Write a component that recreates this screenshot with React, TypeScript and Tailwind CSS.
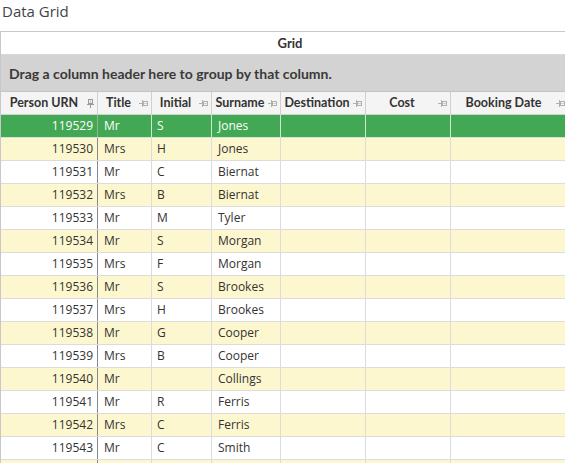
import React from 'react';

type Person = { urn: number; title: string; initial: string; surname: string };

const people: Person[] = [
  { urn: 119529, title: 'Mr', initial: 'S', surname: 'Jones' },
  { urn: 119530, title: 'Mrs', initial: 'H', surname: 'Jones' },
  { urn: 119531, title: 'Mr', initial: 'C', surname: 'Biernat' },
  { urn: 119532, title: 'Mrs', initial: 'B', surname: 'Biernat' },
  { urn: 119533, title: 'Mr', initial: 'M', surname: 'Tyler' },
  { urn: 119534, title: 'Mr', initial: 'S', surname: 'Morgan' },
  { urn: 119535, title: 'Mrs', initial: 'F', surname: 'Morgan' },
  { urn: 119536, title: 'Mr', initial: 'S', surname: 'Brookes' },
  { urn: 119537, title: 'Mrs', initial: 'H', surname: 'Brookes' },
  { urn: 119538, title: 'Mr', initial: 'G', surname: 'Cooper' },
  { urn: 119539, title: 'Mrs', initial: 'B', surname: 'Cooper' },
  { urn: 119540, title: 'Mr', initial: '', surname: 'Collings' },
  { urn: 119541, title: 'Mr', initial: 'R', surname: 'Ferris' },
  { urn: 119542, title: 'Mrs', initial: 'C', surname: 'Ferris' },
  { urn: 119543, title: 'Mr', initial: 'C', surname: 'Smith' },
];

// widths include the 1px right border of each cell
const W = {
  urn: 'w-[97px]',
  title: 'w-[54px]',
  initial: 'w-[60px]',
  surname: 'w-[69px]',
  destination: 'w-[85px]',
  cost: 'w-[85px]',
  booking: 'w-[118px]',
};

const boldFont = { fontFamily: 'Lato, "Open Sans", sans-serif' };

function Pin({ pinned = false }: { pinned?: boolean }) {
  if (pinned) {
    return (
      <svg width="7" height="9" viewBox="0 0 7 9" className="shrink-0">
        <rect x="1.5" y="0.5" width="4" height="4" fill="none" stroke="#9a9a9a" />
        <line x1="0" y1="5.5" x2="7" y2="5.5" stroke="#9a9a9a" />
        <line x1="3.5" y1="6" x2="3.5" y2="9" stroke="#9a9a9a" />
        <line x1="3.5" y1="1" x2="3.5" y2="4" stroke="#c8c8c8" />
      </svg>
    );
  }
  return (
    <svg width="9" height="7" viewBox="0 0 9 7" className="shrink-0">
      <line x1="0" y1="3.5" x2="3" y2="3.5" stroke="#b0b0b0" />
      <line x1="3.5" y1="0" x2="3.5" y2="7" stroke="#b0b0b0" />
      <rect x="4.5" y="1.5" width="4" height="4" fill="none" stroke="#b0b0b0" />
      <line x1="5" y1="3.5" x2="8" y2="3.5" stroke="#d0d0d0" />
    </svg>
  );
}

function HeaderCell({ label, width, pinned }: { label: string; width: string; pinned?: boolean }) {
  return (
    <div className={`${width} shrink-0 h-full flex items-center gap-[2px] border-r border-[#d0d0d0] pl-[2px] pr-[3px]`}>
      <span className="flex-1 text-center whitespace-nowrap">{label}</span>
      <Pin pinned={pinned} />
    </div>
  );
}

function Row({ p, index }: { p?: Person; index: number }) {
  const selected = index === 0;
  const bg = selected ? 'bg-[#42a854] text-white' : index % 2 === 1 ? 'bg-[#fdf7cf]' : 'bg-white';
  const line = selected ? 'border-[#cfe6d2]' : 'border-[#dcdcdc]';
  return (
    <div className={`flex h-[23px] border-b ${line} ${bg}`}>
      <div className={`${W.urn} shrink-0 border-r ${selected ? 'border-[#8fb995]' : 'border-[#8a8a8a]'} text-right pr-[4px] leading-[22px]`}>
        {p?.urn}
      </div>
      <div className={`${W.title} shrink-0 border-r ${line} pl-[6px] leading-[22px]`}>{p?.title}</div>
      <div className={`${W.initial} shrink-0 border-r ${line} pl-[5px] leading-[22px]`}>{p?.initial}</div>
      <div className={`${W.surname} shrink-0 border-r ${line} pl-[6px] leading-[22px]`}>{p?.surname}</div>
      <div className={`${W.destination} shrink-0 border-r ${line}`} />
      <div className={`${W.cost} shrink-0 border-r ${line}`} />
      <div className={`${W.booking} shrink-0 border-r ${line}`} />
      <div className="w-[80px] shrink-0" />
    </div>
  );
}

export default function App() {
  return (
    <div
      className="w-[565px] h-[463px] overflow-hidden bg-white text-[#333]"
      style={{ fontFamily: '"Open Sans", "Noto Sans", sans-serif' }}
    >
      <div className="h-[31px] pl-[2px] pt-[1px] text-[15px] leading-[20px] text-[#444]">Data Grid</div>

      <div className="w-[660px] border-t border-l border-[#c8c8c8] text-[12px]">
        <div className="h-[23px] border-b border-[#d8d8d8] bg-white" style={boldFont}>
          <div className="w-[578px] text-center font-bold text-[13px] leading-[22px] text-[#333]">Grid</div>
        </div>

        <div
          className="h-[37px] bg-[#d3d3d3] border-b border-[#c4c4c4] pl-[8px] flex items-center text-[14px] font-bold text-[#3a3a3a]"
          style={boldFont}
        >
          Drag a column header here to group by that column.
        </div>

        <div className="flex h-[23px] bg-[#f4f4f4] border-b border-[#d0d0d0] font-bold text-[12.5px] text-[#333]" style={boldFont}>
          <HeaderCell label="Person URN" width={W.urn} pinned />
          <HeaderCell label="Title" width={W.title} />
          <HeaderCell label="Initial" width={W.initial} />
          <HeaderCell label="Surname" width={W.surname} />
          <HeaderCell label="Destination" width={W.destination} />
          <HeaderCell label="Cost" width={W.cost} />
          <HeaderCell label="Booking Date" width={W.booking} />
        </div>

        {people.map((p, i) => (
          <Row key={p.urn} p={p} index={i} />
        ))}
        {/* next row, scrolled just into view */}
        <Row index={people.length} />
      </div>
    </div>
  );
}
